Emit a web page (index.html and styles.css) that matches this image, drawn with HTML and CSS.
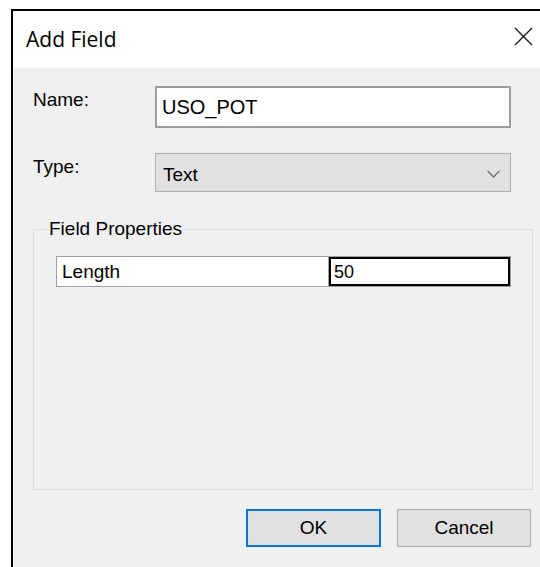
FILE: index.html
```html
<!DOCTYPE html>
<html lang="en">
<head>
<meta charset="utf-8">
<title>Add Field</title>
<link rel="stylesheet" href="styles.css">
</head>
<body>
<div class="window">
  <div class="titlebar">
    <span class="title">Add Field</span>
    <svg class="close" width="19" height="19" viewBox="0 0 19 19" aria-label="Close">
      <path d="M1 1 L18 18 M18 1 L1 18" stroke="#1a1a1a" stroke-width="1.4" fill="none"/>
    </svg>
  </div>
  <div class="client">
    <div class="row">
      <span class="label">Name:</span>
      <div class="textbox">USO_POT</div>
    </div>
    <div class="row row-type">
      <span class="label">Type:</span>
      <div class="combo">
        <span class="combo-text">Text</span>
        <svg class="chevron" width="13" height="8" viewBox="0 0 13 8">
          <path d="M0.5 0.8 L6.5 6.8 L12.5 0.8" stroke="#606060" stroke-width="1.2" fill="none"/>
        </svg>
      </div>
    </div>
    <fieldset class="group">
      <legend class="group-title">Field Properties</legend>
      <div class="propgrid">
        <div class="cell cell-name">Length</div>
        <div class="cell cell-value">50</div>
      </div>
    </fieldset>
    <div class="buttons">
      <button class="btn btn-default" type="button">OK</button>
      <button class="btn" type="button">Cancel</button>
    </div>
  </div>
</div>
</body>
</html>
```

FILE: styles.css
```css
html, body {
  margin: 0;
  padding: 0;
  background: #ffffff;
  overflow: hidden;
  height: 100%;
}

body {
  font-family: "Liberation Sans", Arial, sans-serif;
  font-size: 19px;
  color: #000;
}

.window {
  box-sizing: border-box;
  margin: 9px 0 0 11px;
  width: 529px;
  height: calc(100% - 9px);
  border-top: 2px solid #000;
  border-left: 2px solid #000;
  display: flex;
  flex-direction: column;
  background: #f0f0f0;
  overflow: hidden;
}

/* caption bar */
.titlebar {
  height: 57px;
  background: #ffffff;
  display: flex;
  align-items: flex-start;
  flex-shrink: 0;
}

.title {
  font-family: "Open Sans", "Noto Sans", sans-serif;
  font-size: 21px;
  line-height: 28px;
  margin: 14px 0 0 13px;
  color: #000;
}

.close {
  margin: 16px 7px 0 auto;
}

/* dialog body */
.client {
  padding: 18px 0 0 20px;
  display: flex;
  flex-direction: column;
}

.row {
  display: flex;
  align-items: flex-start;
}

.row-type {
  margin-top: 25px;
}

.label {
  width: 122px;
  line-height: 22px;
  margin-top: 3px;
}

.textbox {
  box-sizing: border-box;
  width: 356px;
  height: 42px;
  background: #fff;
  border: 2px solid #9d9d9d;
  padding: 8px 0 0 5px;
  font-size: 20px;
  line-height: 22px;
}

.combo {
  box-sizing: border-box;
  width: 356px;
  height: 39px;
  background: #e1e1e1;
  border: 1px solid #adadad;
  display: flex;
  align-items: center;
  padding: 0 10px 0 7px;
}

.combo-text {
  line-height: 22px;
  margin-top: 5px;
  flex: 1;
}

.chevron {
  margin-top: 2px;
}

/* group box */
.group {
  box-sizing: border-box;
  width: 500px;
  height: 272px;
  margin: 26px 0 0 0;
  padding: 16px 0 0 22px;
  border: 1px solid #dcdcdc;
  min-width: 0;
}

.group-title {
  padding: 0 2px;
  margin-left: -9px;
  line-height: 22px;
}

.propgrid {
  display: flex;
  width: 455px;
  height: 31px;
  box-sizing: border-box;
  border: 1px solid #a0a0a0;
  background: #fff;
}

.cell {
  box-sizing: border-box;
  height: 100%;
  line-height: 22px;
}

.cell-name {
  width: 272px;
  padding: 4px 0 0 5px;
  border-right: 1px solid #a0a0a0;
}

.cell-value {
  flex: 1;
  border: 2px solid #000;
  padding: 2px 0 0 3px;
  font-size: 18px;
}

/* dialog buttons */
.buttons {
  display: flex;
  justify-content: flex-end;
  gap: 16px;
  margin-top: 19px;
  padding-right: 9px;
}

.btn {
  box-sizing: border-box;
  width: 134px;
  height: 38px;
  background: #e1e1e1;
  border: 1px solid #adadad;
  font-family: "Liberation Sans", Arial, sans-serif;
  font-size: 19px;
  color: #000;
  padding: 0;
  margin: 0;
}

.btn-default {
  width: 135px;
  border: 2px solid #0078d7;
}
```
